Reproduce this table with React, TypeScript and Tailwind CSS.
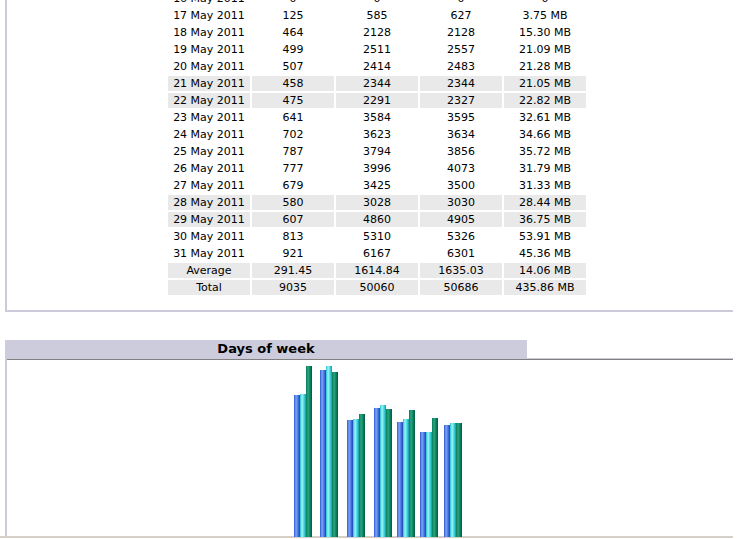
import React from "react";

type Row = { d: string; a: string; b: string; c: string; e: string; g?: boolean };

const rows: Row[] = [
  { d: "16 May 2011", a: "0", b: "0", c: "0", e: "0" },
  { d: "17 May 2011", a: "125", b: "585", c: "627", e: "3.75 MB" },
  { d: "18 May 2011", a: "464", b: "2128", c: "2128", e: "15.30 MB" },
  { d: "19 May 2011", a: "499", b: "2511", c: "2557", e: "21.09 MB" },
  { d: "20 May 2011", a: "507", b: "2414", c: "2483", e: "21.28 MB" },
  { d: "21 May 2011", a: "458", b: "2344", c: "2344", e: "21.05 MB", g: true },
  { d: "22 May 2011", a: "475", b: "2291", c: "2327", e: "22.82 MB", g: true },
  { d: "23 May 2011", a: "641", b: "3584", c: "3595", e: "32.61 MB" },
  { d: "24 May 2011", a: "702", b: "3623", c: "3634", e: "34.66 MB" },
  { d: "25 May 2011", a: "787", b: "3794", c: "3856", e: "35.72 MB" },
  { d: "26 May 2011", a: "777", b: "3996", c: "4073", e: "31.79 MB" },
  { d: "27 May 2011", a: "679", b: "3425", c: "3500", e: "31.33 MB" },
  { d: "28 May 2011", a: "580", b: "3028", c: "3030", e: "28.44 MB", g: true },
  { d: "29 May 2011", a: "607", b: "4860", c: "4905", e: "36.75 MB", g: true },
  { d: "30 May 2011", a: "813", b: "5310", c: "5326", e: "53.91 MB" },
  { d: "31 May 2011", a: "921", b: "6167", c: "6301", e: "45.36 MB" },
  { d: "Average", a: "291.45", b: "1614.84", c: "1635.03", e: "14.06 MB", g: true },
  { d: "Total", a: "9035", b: "50060", c: "50686", e: "435.86 MB", g: true },
];

// [x, top] absolute page coords for blue, cyan, green bars
const groups: [number, number][][] = [
  [[294, 395], [300, 394], [306, 366]],
  [[320, 370], [326, 366], [332, 372]],
  [[347, 420], [353, 419], [359, 414]],
  [[374, 408], [380, 405], [386, 409]],
  [[397, 422], [403, 419], [409, 410]],
  [[420, 432], [426, 432], [432, 418]],
  [[444, 425], [450, 423], [456, 423]],
];

const fills = ["url(#gBlue)", "url(#gCyan)", "url(#gGreen)"];

function Cell({ children, g }: { children: React.ReactNode; g?: boolean }) {
  return (
    <td
      className={
        "w-[82px] h-[15px] p-0 text-center align-middle text-[11px] leading-[15px] text-black whitespace-nowrap " +
        (g ? "bg-[#e9e9e9]" : "bg-white")
      }
    >
      {children}
    </td>
  );
}

export default function App() {
  return (
    <div className="w-[748px] h-[539px] overflow-hidden bg-white font-['DejaVu_Sans',Verdana,sans-serif]">
      {/* top panel (scrolled) */}
      <div className="mt-[-11px] ml-[5px] w-[728px] border-l-2 border-b-2 border-[#cccadb] pl-[159px] pb-[13px]">
        <table className="border-separate border-spacing-[2px]">
          <tbody>
            {rows.map((r) => (
              <tr key={r.d}>
                <Cell g={r.g}>{r.d}</Cell>
                <Cell g={r.g}>{r.a}</Cell>
                <Cell g={r.g}>{r.b}</Cell>
                <Cell g={r.g}>{r.c}</Cell>
                <Cell g={r.g}>{r.e}</Cell>
              </tr>
            ))}
          </tbody>
        </table>
      </div>

      {/* days of week section */}
      <div className="mt-[28px] ml-[5px] w-[522px] h-[18px] bg-[#ccccdd] flex items-center justify-center">
        <span className="text-[13px] font-bold leading-[18px] text-black">Days of week</span>
      </div>
      <div className="ml-[5px] w-[728px] border-l-2 border-[#cccadb]">
        <div className="border-t border-[#cccadb]">
          <div className="border-t border-[#808080] h-[177px]">
            <svg width="726" height="177" viewBox="0 0 726 177" className="block">
              <defs>
                <linearGradient id="gBlue" x1="0" y1="0" x2="1" y2="0">
                  <stop offset="0" stopColor="#2a58d0" />
                  <stop offset="0.35" stopColor="#7ea6f6" />
                  <stop offset="0.65" stopColor="#4a78e6" />
                  <stop offset="1" stopColor="#1a44b4" />
                </linearGradient>
                <linearGradient id="gCyan" x1="0" y1="0" x2="1" y2="0">
                  <stop offset="0" stopColor="#28bfd0" />
                  <stop offset="0.35" stopColor="#9ef4f4" />
                  <stop offset="0.65" stopColor="#46dce4" />
                  <stop offset="1" stopColor="#1696a4" />
                </linearGradient>
                <linearGradient id="gGreen" x1="0" y1="0" x2="1" y2="0">
                  <stop offset="0" stopColor="#0b7a58" />
                  <stop offset="0.35" stopColor="#2aa684" />
                  <stop offset="0.65" stopColor="#0f8462" />
                  <stop offset="1" stopColor="#005a3c" />
                </linearGradient>
              </defs>
              {groups.map((g, gi) =>
                g.map(([x, top], bi) => (
                  <rect
                    key={gi + "-" + bi}
                    x={x - 7}
                    y={top - 360}
                    width={6}
                    height={537 - top}
                    fill={fills[bi]}
                  />
                ))
              )}
            </svg>
          </div>
        </div>
      </div>
      <div className="w-[733px] h-[2px] bg-[#d4d0c8]" />
    </div>
  );
}
